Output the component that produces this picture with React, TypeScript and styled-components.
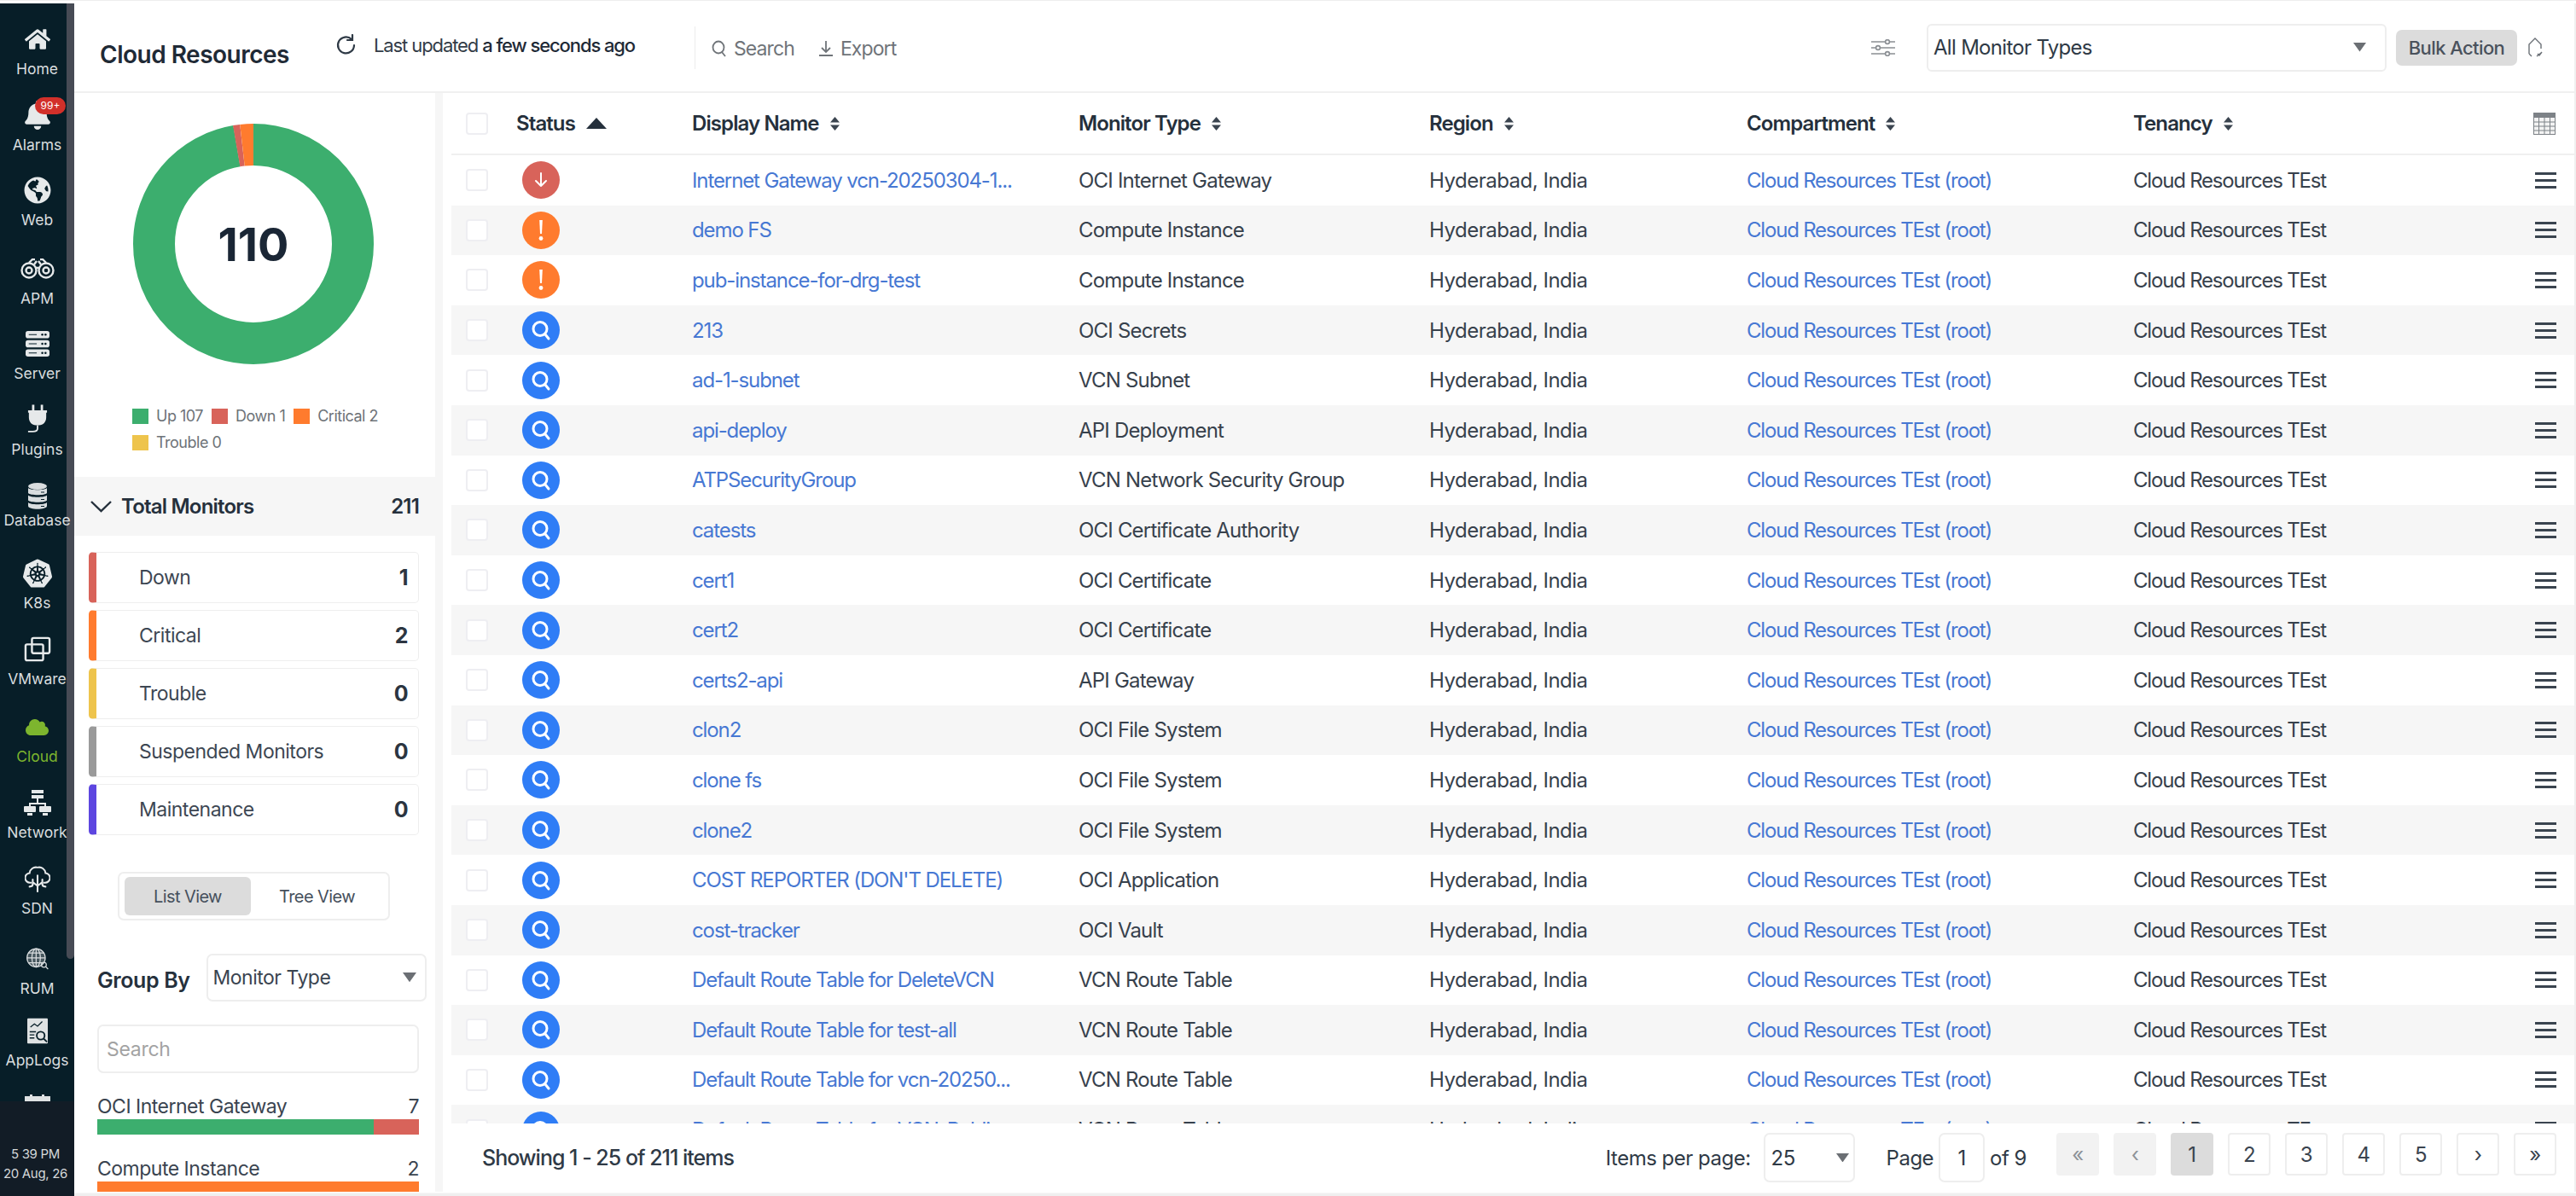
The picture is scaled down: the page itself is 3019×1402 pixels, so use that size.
import { ReactNode } from "react"
import styled, { createGlobalStyle } from "styled-components"
import { FaBell, FaCloud, FaGlobeAmericas, FaHome } from "react-icons/fa"
import { SiKubernetes } from "react-icons/si"

const GlobalStyle = createGlobalStyle`
  html, body {
    margin: 0;
    padding: 0;
    background: #fff;
  }
  body {
    font-family: Inter, "Noto Sans", sans-serif;
    color: #2f3a46;
  }
  * {
    box-sizing: border-box;
  }
`

const Page = styled.div`
  width: 3019px;
  height: 1402px;
  display: flex;
  overflow: hidden;
  padding: 3px 0 5px;
  background: linear-gradient(#fff 1397px, #efefef 1398px);
  border-top: 1px solid #eeeeee;
`

/* left rail */
const Rail = styled.nav`
  width: 87px;
  flex: none;
  display: flex;
  flex-direction: column;
  background: #071e28;
  margin-bottom: -5px;
  position: relative;
`

const RailItems = styled.div`
  flex: 1;
  overflow: hidden;
  padding-top: 24px;
  position: relative;
`

const RailThumb = styled.div`
  position: absolute;
  top: 0;
  right: 0;
  width: 9px;
  height: 1120px;
  background: #474b55;
  border-radius: 0 0 5px 5px;
`

const RailItem = styled.div<{ $pitch: number }>`
  height: ${({ $pitch }) => $pitch}px;
  display: flex;
  flex-direction: column;
  align-items: center;
  position: relative;
  color: #e6e9ea;
`

const RailIcon = styled.div<{ $active?: boolean }>`
  height: 36px;
  display: flex;
  align-items: center;
  justify-content: center;
  color: ${({ $active }) => ($active ? "#7db52e" : "#e6e9ea")};
`

const RailLabel = styled.div<{ $active?: boolean; $tight?: boolean }>`
  margin-top: ${({ $tight }) => ($tight ? 1 : 7)}px;
  font-size: 17.5px;
  line-height: 20px;
  white-space: nowrap;
  color: ${({ $active }) => ($active ? "#7db52e" : "#d9dddf")};
`

const AlarmBadge = styled.span`
  position: absolute;
  top: -3px;
  left: 41px;
  width: 36px;
  height: 20px;
  border-radius: 10px;
  background: #d2302a;
  color: #fff;
  font-size: 12px;
  line-height: 20px;
  text-align: center;
`

const RailClock = styled.div`
  height: 111px;
  flex: none;
  background: #121c26;
  padding: 50px 4px 0 0;
  text-align: center;
  font-size: 15px;
  letter-spacing: -0.3px;
  line-height: 23px;
  white-space: nowrap;
  color: #d5d8da;
  position: relative;
  z-index: 1;
`

/* main */
const Main = styled.div`
  flex: 1;
  min-width: 0;
  display: flex;
  flex-direction: column;
  border-right: 2px solid #f0f0f0;
`

const Header = styled.header`
  height: 105px;
  flex: none;
  display: flex;
  align-items: center;
  border-bottom: 2px solid #f0f0f0;
  padding: 0 35px 0 30px;
`

const Title = styled.h1`
  margin: 16px 0 0;
  width: 276px;
  font-size: 28px;
  font-weight: 600;
  color: #1f2a36;
  letter-spacing: -0.5px;
`

const Updated = styled.div`
  display: flex;
  align-items: center;
  gap: 19px;
  width: 421px;
  font-size: 22px;
  letter-spacing: -1.1px;
  color: #333c47;
  margin-bottom: 6px;
  b {
    font-weight: 500;
    color: #1f2a36;
  }
`

const HeaderDivider = styled.div`
  width: 1px;
  height: 50px;
  background: #ececec;
  margin-right: 19px;
`

const HeaderLink = styled.div`
  display: flex;
  align-items: center;
  gap: 8px;
  margin: 2px 28px 0 0;
  font-size: 23px;
  letter-spacing: -0.9px;
  color: #6f7479;
`

const Spacer = styled.div`
  flex: 1;
`

const TypeSelect = styled.div`
  width: 539px;
  height: 56px;
  margin: 0 11px 0 37px;
  padding: 0 22px 0 6px;
  border: 2px solid #eeeeee;
  border-radius: 6px;
  display: flex;
  align-items: center;
  justify-content: space-between;
  font-size: 24px;
  letter-spacing: -0.7px;
  color: #2f3a46;
`

const BulkButton = styled.button`
  width: 142px;
  height: 42px;
  border: none;
  border-radius: 7px;
  background: #dcdcdc;
  color: #4a525c;
  font: 500 22px Inter, sans-serif;
  letter-spacing: -0.6px;
  padding: 0;
  margin-right: 10px;
`

const Body = styled.div`
  flex: 1;
  min-height: 0;
  display: flex;
`

/* left panel */
const Panel = styled.aside`
  width: 423px;
  flex: none;
  overflow: hidden;
`

const DonutBox = styled.div`
  height: 450px;
  padding: 36px 0 0;
`

const Donut = styled.div`
  width: 282px;
  height: 282px;
  margin: 0 0 0 69px;
  position: relative;
`

const DonutValue = styled.div`
  position: absolute;
  inset: 0;
  display: flex;
  align-items: center;
  justify-content: center;
  font-size: 54px;
  font-weight: 700;
  color: #1a2635;
`

const Legend = styled.div`
  display: flex;
  flex-wrap: wrap;
  margin: 52px 0 0 68px;
  width: 300px;
  row-gap: 13px;
  column-gap: 10px;
`

const LegendItem = styled.div`
  display: flex;
  align-items: center;
  gap: 9px;
  font-size: 18px;
  letter-spacing: -0.5px;
  line-height: 18px;
  color: #6e7378;
`

const Swatch = styled.span<{ $color: string }>`
  width: 19px;
  height: 18px;
  background: ${({ $color }) => $color};
`

const TotalBar = styled.div`
  height: 69px;
  background: #f6f6f6;
  display: flex;
  align-items: center;
  padding: 0 19px;
  gap: 11px;
  font-size: 24px;
  font-weight: 600;
  letter-spacing: -0.8px;
  color: #25303c;
  span:last-child {
    margin-left: auto;
  }
`

const StatusList = styled.div`
  display: flex;
  flex-direction: column;
  gap: 8px;
  margin: 19px 19px 0 17px;
`

const StatusCard = styled.div<{ $color: string }>`
  height: 60px;
  border: 1px solid #eeeeee;
  border-left: 9px solid ${({ $color }) => $color};
  border-radius: 5px;
  display: flex;
  align-items: center;
  justify-content: space-between;
  padding: 0 12px 0 50px;
  font-size: 23px;
  letter-spacing: -0.5px;
  color: #3d4753;
  b {
    font-size: 25px;
    font-weight: 700;
    color: #2c3541;
  }
`

const ViewToggle = styled.div`
  width: 319px;
  height: 57px;
  margin: 43px 0 0 51px;
  padding: 4px 6px;
  border: 2px solid #eeeeee;
  border-radius: 7px;
  display: flex;
`

const ViewOption = styled.div<{ $active?: boolean }>`
  width: 148px;
  flex: none;
  display: flex;
  align-items: center;
  justify-content: center;
  border-radius: 6px;
  font-size: 20px;
  letter-spacing: -0.6px;
  color: #46505c;
  background: ${({ $active }) => ($active ? "#dcdcdc" : "transparent")};
  & + & {
    flex: 1;
  }
`

const GroupRow = styled.div`
  display: flex;
  align-items: center;
  gap: 19px;
  margin: 39px 10px 0 27px;
  font-size: 25px;
  font-weight: 600;
  letter-spacing: -0.4px;
  color: #25303c;
`

const GroupLabel = styled.span`
  margin-top: 5px;
`

const GroupSelect = styled.div`
  flex: 1;
  height: 56px;
  padding: 0 10px 0 6px;
  border: 2px solid #eeeeee;
  border-radius: 7px;
  display: flex;
  align-items: center;
  justify-content: space-between;
  font-size: 23px;
  font-weight: 400;
  letter-spacing: -0.5px;
  color: #3a4450;
`

const SearchBox = styled.div`
  height: 57px;
  margin: 27px 19px 0 27px;
  padding: 0 9px;
  border: 2px solid #eeeeee;
  border-radius: 7px;
  display: flex;
  align-items: center;
  font-size: 23px;
  letter-spacing: -0.3px;
  color: #a3a3a3;
`

const GroupStat = styled.div`
  margin: 0 19px 0 27px;
  padding-top: 24px;
  height: 73px;
`

const GroupStatHead = styled.div`
  display: flex;
  justify-content: space-between;
  font-size: 23px;
  letter-spacing: -0.5px;
  line-height: 30px;
  color: #3a4450;
`

const StatBar = styled.div`
  display: flex;
  height: 18px;
`

const StatSegment = styled.div<{ $color: string }>`
  background: ${({ $color }) => $color};
`

const Gutter = styled.div`
  width: 9px;
  flex: none;
  background: #f6f6f6;
`

/* table */
const TableArea = styled.section`
  flex: 1;
  min-width: 0;
  display: flex;
  flex-direction: column;
  padding-left: 10px;
`

const columns = "59px 206px 453px 411px 372px 453px 463px 1fr"

const HeadRow = styled.div`
  height: 73px;
  flex: none;
  display: grid;
  grid-template-columns: ${columns};
  align-items: center;
  padding-left: 17px;
  border-bottom: 2px solid #f0f0f0;
  font-size: 24px;
  font-weight: 600;
  letter-spacing: -0.9px;
  color: #25303c;
`

const HeadCell = styled.div`
  display: flex;
  align-items: center;
  gap: 13px;
`

const RowList = styled.div`
  flex: 1;
  min-height: 0;
  overflow: hidden;
`

const Row = styled.div`
  height: 58.6px;
  display: grid;
  grid-template-columns: ${columns};
  align-items: center;
  padding-left: 17px;
  font-size: 24px;
  white-space: nowrap;
  color: #37414c;
  &:nth-child(even) {
    background: #f6f6f6;
  }
`

const Checkbox = styled.span`
  display: block;
  width: 26px;
  height: 26px;
  background: #fff;
  border: 2px solid #eeeef2;
  border-radius: 4px;
`

const StatusDot = styled.span<{ $color: string }>`
  width: 44px;
  height: 44px;
  margin-left: 7px;
  border-radius: 50%;
  background: ${({ $color }) => $color};
  display: flex;
  align-items: center;
  justify-content: center;
`

const Cell = styled.span<{ $spacing: number }>`
  letter-spacing: ${({ $spacing }) => $spacing}px;
`

const LinkCell = styled(Cell)`
  color: #4778d3;
`

const MenuIcon = styled.div`
  width: 25px;
  height: 19px;
  margin-left: 8px;
  border-top: 3px solid #3a444f;
  border-bottom: 3px solid #3a444f;
  position: relative;
  &::after {
    content: "";
    position: absolute;
    left: 0;
    right: 0;
    top: 5px;
    height: 3px;
    background: #3a444f;
  }
`

const Footer = styled.footer`
  height: 80px;
  flex: none;
  display: flex;
  align-items: center;
  padding: 0 21px 0 36px;
  background: #fff;
  font-size: 24px;
  letter-spacing: -0.5px;
  color: #2f3a46;
`

const FooterSummary = styled.div`
  font-weight: 500;
  font-size: 25px;
  letter-spacing: -1px;
  flex: 1;
`

const PerPage = styled.div`
  width: 107px;
  height: 58px;
  margin: 0 37px 0 15px;
  padding: 0 5px 0 7px;
  border: 2px solid #eeeeee;
  border-radius: 7px;
  display: flex;
  align-items: center;
  justify-content: space-between;
`

const PageInput = styled.div`
  width: 54px;
  height: 58px;
  margin: 0 6px;
  border: 2px solid #eeeeee;
  border-radius: 7px;
  display: flex;
  align-items: center;
  justify-content: center;
`

const Pager = styled.div`
  display: flex;
  gap: 17px;
  margin-left: 35px;
  margin-top: -8px;
`

const PagerButton = styled.div<{ $state?: "off" | "on" }>`
  width: 50px;
  height: 50px;
  display: flex;
  align-items: center;
  justify-content: center;
  border-radius: 4px;
  border: 2px solid ${({ $state }) => ($state ? "transparent" : "#eeeeee")};
  background: ${({ $state }) => ($state === "on" ? "#dcdcdc" : $state === "off" ? "#f2f2f2" : "#fff")};
  color: ${({ $state }) => ($state === "off" ? "#8d9298" : "#3a444f")};
`

/* small drawings */
const Caret = ({ color = "#6b6f74", size = 15 }: { color?: string; size?: number }) => (
  <svg width={size} height={size * 0.7} viewBox="0 0 10 7">
    <path d="M0 0h10L5 7z" fill={color} />
  </svg>
)

const SortAscIcon = () => (
  <svg width="24" height="13" viewBox="0 0 24 13">
    <path d="M12 0l12 13H0z" fill="#25303c" />
  </svg>
)

const SortIcon = () => (
  <svg width="11" height="16" viewBox="0 0 11 16" fill="#3a444f">
    <path d="M5.5 0 11 6.500H0zM5.500 16 0 9.500h11z" />
  </svg>
)

const StatusGlyph = ({ kind }: { kind: string }) => {
  if (kind === "down") {
    return (
      <svg width="22" height="22" viewBox="0 0 22 22" fill="none" stroke="#fff" strokeWidth="2" strokeLinecap="round" strokeLinejoin="round">
        <path d="M11 3v15M5 12l6 6 6-6" />
      </svg>
    )
  }
  if (kind === "critical") {
    return (
      <svg width="8" height="26" viewBox="0 0 8 26" fill="#fff">
        <path d="M2.2 1h3.600L5 17H3z" />
        <circle cx="4" cy="22.5" r="2.4" />
      </svg>
    )
  }
  return (
    <svg width="26" height="26" viewBox="0 0 26 26" fill="none" stroke="#fff" strokeWidth="3" strokeLinecap="round">
      <circle cx="12" cy="11.5" r="8" />
      <path d="M18 18l4 5" />
    </svg>
  )
}

const BinocularsIcon = () => (
  <svg width="40" height="24" viewBox="0 0 40 24" fill="none" stroke="#e6e9ea" strokeWidth="2.4">
    <circle cx="10" cy="14" r="8.5" />
    <circle cx="30" cy="14" r="8.5" />
    <path d="M16 7l3-4M24 7l-3-4M10 5l4-4h3M30 5l-4-4h-3M17 11h6" />
    <circle cx="10" cy="14" r="3.5" />
    <circle cx="30" cy="14" r="3.5" />
  </svg>
)

const ServerIcon = () => (
  <svg width="28" height="32" viewBox="0 0 30 32" fill="#e6e9ea">
    <rect y="0" width="30" height="9" rx="3" />
    <rect y="11.5" width="30" height="9" rx="3" />
    <rect y="23" width="30" height="9" rx="3" />
    <path d="M4 4h10v1H4zM4 15.5h10v1H4zM4 27h10v1H4z" fill="#071e28" />
    <circle cx="21" cy="4.5" r="1.4" fill="#071e28" />
    <circle cx="25" cy="4.5" r="1.4" fill="#071e28" />
    <circle cx="21" cy="16" r="1.4" fill="#071e28" />
    <circle cx="25" cy="16" r="1.4" fill="#071e28" />
    <circle cx="21" cy="27.5" r="1.4" fill="#071e28" />
    <circle cx="25" cy="27.5" r="1.4" fill="#071e28" />
  </svg>
)

const PlugIcon = () => (
  <svg width="24" height="38" viewBox="0 0 26 38" fill="#e6e9ea">
    <rect x="6" y="0" width="3" height="8" />
    <rect x="17" y="0" width="3" height="8" />
    <path d="M1 7h24v3h-1v6c0 6-4 10-9 10h-4C6 26 2 22 2 16v-6H1z" />
    <path d="M13 26v4c0 3-3 4-6 4H1" fill="none" stroke="#e6e9ea" strokeWidth="2" />
  </svg>
)

const DatabaseIcon = () => (
  <svg width="22" height="31" viewBox="0 0 22 31" fill="#d9dddf">
    <ellipse cx="11" cy="4" rx="11" ry="4" />
    <path d="M0 6c2 3 20 3 22 0v6c-2 3-20 3-22 0zM0 14.5c2 3 20 3 22 0v6c-2 3-20 3-22 0zM0 23c2 3 20 3 22 0v4c0 5-22 5-22 0z" />
    <path d="M15 11h4M15 19.500h4M15 27.500h4" stroke="#071e28" strokeWidth="1" />
  </svg>
)

const VmwareIcon = () => (
  <svg width="32" height="30" viewBox="0 0 34 32" fill="none" stroke="#e6e9ea" strokeWidth="2.6">
    <rect x="10" y="2" width="22" height="19" rx="2" />
    <rect x="2" y="10" width="22" height="20" rx="2" />
  </svg>
)

const NetworkIcon = () => (
  <svg width="32" height="31" viewBox="0 0 32 31" fill="#e6e9ea">
    <rect x="9" y="0" width="14" height="4" />
    <rect x="9" y="6" width="14" height="4" />
    <path d="M15 10h2v5h9v4h-2v-2H8v2H6v-4h9z" />
    <rect x="0" y="19" width="14" height="7" rx="1" />
    <rect x="18" y="19" width="14" height="7" rx="1" />
    <rect x="4" y="27" width="6" height="3" />
    <rect x="22" y="27" width="6" height="3" />
  </svg>
)

const SdnIcon = () => (
  <svg width="30" height="32" viewBox="0 0 32 34" fill="none" stroke="#e6e9ea" strokeWidth="2.2" strokeLinecap="round">
    <path d="M8 22H7a6 6 0 0 1-1-12 8 8 0 0 1 10-7 8 8 0 0 1 10 7 6 6 0 0 1-1 12h-1" />
    <path d="M16 13v20M10 18v6c0 2-2 3-4 3M22 18v6c0 2 2 3 4 3M11 22l5 4 5-4" />
  </svg>
)

const RumIcon = () => (
  <svg width="28" height="27" viewBox="0 0 34 32" fill="none" stroke="#d9dddf" strokeWidth="1.5">
    <circle cx="15" cy="14" r="13" fill="#d9dddf" fillOpacity="0.3" />
    <ellipse cx="15" cy="14" rx="6" ry="13" />
    <path d="M2 14h26M4 7h22M4 21h22M15 1v26" />
    <circle cx="26" cy="24" r="3.5" />
    <path d="M29 27l3 3" />
  </svg>
)

const AppLogsIcon = () => (
  <svg width="24" height="31" viewBox="0 0 26 32">
    <rect width="26" height="32" rx="1" fill="#dfe2e3" />
    <path d="M4 11l5-4 4 3 6-6" fill="none" stroke="#071e28" strokeWidth="1.4" />
    <path d="M3 17h8M3 21h6M3 25h6" stroke="#071e28" strokeWidth="1.6" />
    <circle cx="17" cy="22" r="5" fill="#dfe2e3" stroke="#071e28" strokeWidth="2" />
    <path d="M21 26l4 4" stroke="#071e28" strokeWidth="2" />
  </svg>
)

const ClippedIcon = () => (
  <svg width="30" height="8" viewBox="0 0 30 8" fill="#dfe2e3">
    <path d="M0 2h30v6H0z" />
    <rect x="6" y="0" width="3" height="3" />
    <rect x="20" y="0" width="3" height="3" />
  </svg>
)

const railItems: { label: string; icon: ReactNode; pitch: number; active?: boolean; badge?: boolean; tight?: boolean }[] = [
  { label: "Home", icon: <FaHome size={30} />, pitch: 89 },
  { label: "Alarms", icon: <FaBell size={34} />, pitch: 88, badge: true },
  { label: "Web", icon: <FaGlobeAmericas size={32} />, pitch: 92 },
  { label: "APM", icon: <BinocularsIcon />, pitch: 88 },
  { label: "Server", icon: <ServerIcon />, pitch: 89 },
  { label: "Plugins", icon: <PlugIcon />, pitch: 89 },
  { label: "Database", icon: <DatabaseIcon />, pitch: 91, tight: true },
  { label: "K8s", icon: <SiKubernetes size={34} />, pitch: 89 },
  { label: "VMware", icon: <VmwareIcon />, pitch: 91 },
  { label: "Cloud", icon: <FaCloud size={27} />, pitch: 89, active: true },
  { label: "Network", icon: <NetworkIcon />, pitch: 89 },
  { label: "SDN", icon: <SdnIcon />, pitch: 94 },
  { label: "RUM", icon: <RumIcon />, pitch: 84 },
  { label: "AppLogs", icon: <AppLogsIcon />, pitch: 80 },
  { label: "", icon: <ClippedIcon />, pitch: 40 },
]

const statuses = [
  { label: "Down", value: 1, color: "#d8635a" },
  { label: "Critical", value: 2, color: "#ff7b2e" },
  { label: "Trouble", value: 0, color: "#eec44c" },
  { label: "Suspended Monitors", value: 0, color: "#9a9a9a" },
  { label: "Maintenance", value: 0, color: "#5d46e0" },
]

const rows: [string, string][] = [
  ["Internet Gateway vcn-20250304-1...", "OCI Internet Gateway"],
  ["demo FS", "Compute Instance"],
  ["pub-instance-for-drg-test", "Compute Instance"],
  ["213", "OCI Secrets"],
  ["ad-1-subnet", "VCN Subnet"],
  ["api-deploy", "API Deployment"],
  ["ATPSecurityGroup", "VCN Network Security Group"],
  ["catests", "OCI Certificate Authority"],
  ["cert1", "OCI Certificate"],
  ["cert2", "OCI Certificate"],
  ["certs2-api", "API Gateway"],
  ["clon2", "OCI File System"],
  ["clone fs", "OCI File System"],
  ["clone2", "OCI File System"],
  ["COST REPORTER (DON'T DELETE)", "OCI Application"],
  ["cost-tracker", "OCI Vault"],
  ["Default Route Table for DeleteVCN", "VCN Route Table"],
  ["Default Route Table for test-all", "VCN Route Table"],
  ["Default Route Table for vcn-20250...", "VCN Route Table"],
  ["Default Route Table for VCN-Publi...", "VCN Route Table"],
]

const statusOf = (index: number) => {
  if (index === 0) return { kind: "down", color: "#d8635a" }
  if (index < 3) return { kind: "critical", color: "#ff7b2e" }
  return { kind: "search", color: "#2f7df6" }
}

const DONUT_R = 116.5
const circumference = 2 * Math.PI * DONUT_R
const slices = [
  { color: "#3cae6e", from: 0, to: 350.2 },
  { color: "#d8635a", from: 350.2, to: 353.6 },
  { color: "#ff7b2e", from: 353.6, to: 360 },
]

export default function App() {
  return (
    <Page>
      <GlobalStyle />
      <Rail>
        <RailItems>
          <RailThumb />
          {railItems.map((item, index) => (
            <RailItem key={index} $pitch={item.pitch}>
              <RailIcon $active={item.active}>{item.icon}</RailIcon>
              <RailLabel $active={item.active} $tight={item.tight}>
                {item.label}
              </RailLabel>
              {item.badge && <AlarmBadge>99+</AlarmBadge>}
            </RailItem>
          ))}
        </RailItems>
        <RailClock>
          5 39 PM
          <br />
          20 Aug, 26
        </RailClock>
      </Rail>

      <Main>
        <Header>
          <Title>Cloud Resources</Title>
          <Updated>
            <svg width="26" height="26" viewBox="0 0 26 26" fill="none" stroke="#2f3a46" strokeWidth="2.2" strokeLinecap="round">
              <path d="M22 13a9.5 9.5 0 1 1-3-7" />
              <path d="M20 1v6h-6" />
            </svg>
            <span>
              Last updated <b>a few seconds ago</b>
            </span>
          </Updated>
          <HeaderDivider />
          <HeaderLink>
            <svg width="18" height="20" viewBox="0 0 18 20" fill="none" stroke="#6f7479" strokeWidth="1.8">
              <ellipse cx="8" cy="8.5" rx="6.5" ry="7" />
              <path d="M12 14l4 5" />
            </svg>
            Search
          </HeaderLink>
          <HeaderLink>
            <svg width="18" height="20" viewBox="0 0 18 20" fill="none" stroke="#6f7479" strokeWidth="1.8">
              <path d="M9 1v12M4 9l5 5 5-5M1 18h16" />
            </svg>
            Export
          </HeaderLink>
          <Spacer />
          <svg width="28" height="20" viewBox="0 0 28 20" fill="none" stroke="#8a8e93" strokeWidth="1.6">
            <path d="M0 3h28M0 10h28M0 17h28" />
            <circle cx="19" cy="3" r="2.4" fill="#fff" />
            <circle cx="8" cy="10" r="2.4" fill="#fff" />
            <circle cx="19" cy="17" r="2.4" fill="#fff" />
          </svg>
          <TypeSelect>
            All Monitor Types
            <Caret />
          </TypeSelect>
          <BulkButton>Bulk Action</BulkButton>
          <svg width="22" height="24" viewBox="0 0 22 24" fill="none" stroke="#6b7076" strokeWidth="1.4">
            <path d="M4 19V8l7-7 7 7v3M18 11v2M4 19l3 3M13 22l5-4M14 19l2 2 3-4" />
          </svg>
        </Header>

        <Body>
          <Panel>
            <DonutBox>
              <Donut>
                <svg width="282" height="282" viewBox="0 0 282 282">
                  {slices.map((slice) => (
                    <circle
                      key={slice.color}
                      cx="141"
                      cy="141"
                      r={DONUT_R}
                      fill="none"
                      stroke={slice.color}
                      strokeWidth="49"
                      strokeDasharray={`${((slice.to - slice.from) / 360) * circumference} ${circumference}`}
                      transform={`rotate(${slice.from - 90} 141 141)`}
                    />
                  ))}
                </svg>
                <DonutValue>110</DonutValue>
              </Donut>
              <Legend>
                <LegendItem>
                  <Swatch $color="#3cae6e" />
                  Up 107
                </LegendItem>
                <LegendItem>
                  <Swatch $color="#d8635a" />
                  Down 1
                </LegendItem>
                <LegendItem>
                  <Swatch $color="#ff7b2e" />
                  Critical 2
                </LegendItem>
                <LegendItem>
                  <Swatch $color="#eec44c" />
                  Trouble 0
                </LegendItem>
              </Legend>
            </DonutBox>
            <TotalBar>
              <svg width="25" height="14" viewBox="0 0 25 14" fill="none" stroke="#25303c" strokeWidth="2.4">
                <path d="M1 1l11.5 11L24 1" />
              </svg>
              <span>Total Monitors</span>
              <span>211</span>
            </TotalBar>
            <StatusList>
              {statuses.map((status) => (
                <StatusCard key={status.label} $color={status.color}>
                  {status.label}
                  <b>{status.value}</b>
                </StatusCard>
              ))}
            </StatusList>
            <ViewToggle>
              <ViewOption $active>List View</ViewOption>
              <ViewOption>Tree View</ViewOption>
            </ViewToggle>
            <GroupRow>
              <GroupLabel>Group By</GroupLabel>
              <GroupSelect>
                Monitor Type
                <Caret size={16} />
              </GroupSelect>
            </GroupRow>
            <SearchBox>Search</SearchBox>
            <GroupStat>
              <GroupStatHead>
                <span>OCI Internet Gateway</span>
                <span>7</span>
              </GroupStatHead>
              <StatBar>
                <StatSegment $color="#3cae6e" style={{ width: "86%" }} />
                <StatSegment $color="#d8635a" style={{ width: "14%" }} />
              </StatBar>
            </GroupStat>
            <GroupStat>
              <GroupStatHead>
                <span>Compute Instance</span>
                <span>2</span>
              </GroupStatHead>
              <StatBar>
                <StatSegment $color="#ff7b2e" style={{ width: "100%" }} />
              </StatBar>
            </GroupStat>
          </Panel>

          <Gutter />

          <TableArea>
            <HeadRow>
              <Checkbox />
              <HeadCell>
                Status
                <SortAscIcon />
              </HeadCell>
              <HeadCell>
                Display Name
                <SortIcon />
              </HeadCell>
              <HeadCell>
                Monitor Type
                <SortIcon />
              </HeadCell>
              <HeadCell>
                Region
                <SortIcon />
              </HeadCell>
              <HeadCell>
                Compartment
                <SortIcon />
              </HeadCell>
              <HeadCell>
                Tenancy
                <SortIcon />
              </HeadCell>
              <svg width="26" height="26" viewBox="0 0 26 26" style={{ marginLeft: 6 }} fill="none" stroke="#7d8287" strokeWidth="1">
                <rect x="0.5" y="0.5" width="25" height="25" fill="#f3f3f3" />
                <rect x="0" y="0" width="26" height="6" fill="#7d8287" stroke="none" />
                <path d="M0 11h26M0 16h26M0 21h26M6.5 6v20M13 6v20M19.5 6v20" />
              </svg>
            </HeadRow>
            <RowList>
              {rows.map(([name, type], index) => {
                const status = statusOf(index)
                return (
                  <Row key={name}>
                    <Checkbox />
                    <StatusDot $color={status.color}>
                      <StatusGlyph kind={status.kind} />
                    </StatusDot>
                    <LinkCell $spacing={-1.1}>{name}</LinkCell>
                    <Cell $spacing={-0.8}>{type}</Cell>
                    <Cell $spacing={-0.5}>Hyderabad, India</Cell>
                    <LinkCell $spacing={-1.2}>Cloud Resources TEst (root)</LinkCell>
                    <Cell $spacing={-1.2}>Cloud Resources TEst</Cell>
                    <MenuIcon />
                  </Row>
                )
              })}
            </RowList>
            <Footer>
              <FooterSummary>Showing 1 - 25 of 211 items</FooterSummary>
              Items per page:
              <PerPage>
                25
                <Caret />
              </PerPage>
              Page
              <PageInput>1</PageInput>
              of 9
              <Pager>
                <PagerButton $state="off">«</PagerButton>
                <PagerButton $state="off">‹</PagerButton>
                <PagerButton $state="on">1</PagerButton>
                <PagerButton>2</PagerButton>
                <PagerButton>3</PagerButton>
                <PagerButton>4</PagerButton>
                <PagerButton>5</PagerButton>
                <PagerButton>›</PagerButton>
                <PagerButton>»</PagerButton>
              </Pager>
            </Footer>
          </TableArea>
        </Body>
      </Main>
    </Page>
  )
}
